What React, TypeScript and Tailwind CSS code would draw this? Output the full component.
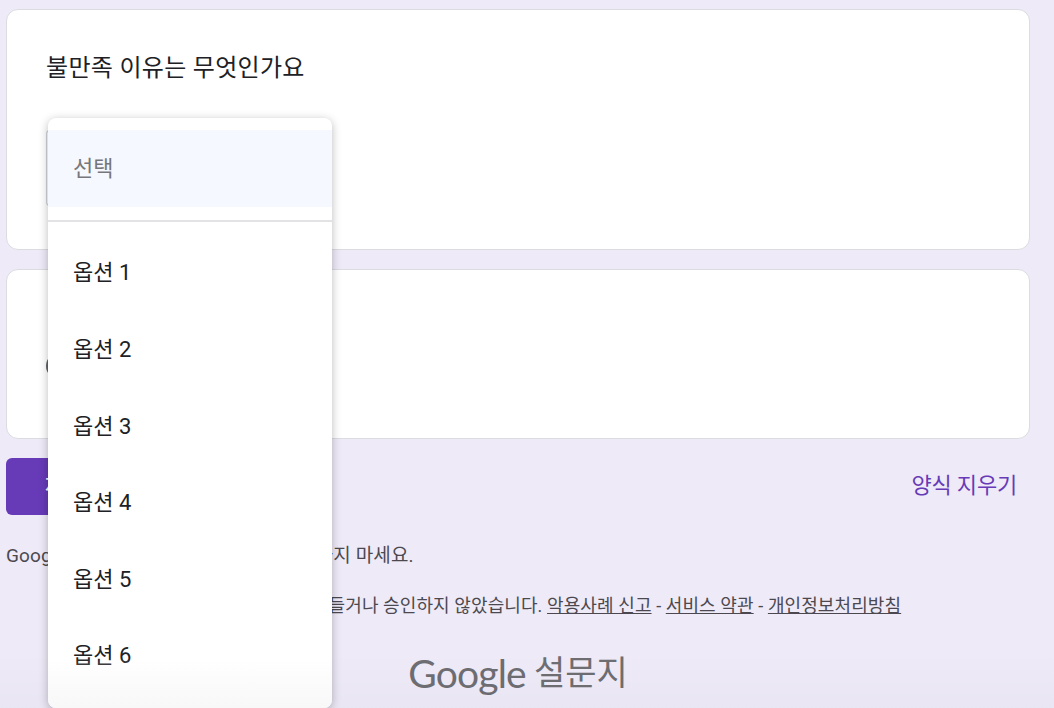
export default function App() {
  const options = ["옵션 1", "옵션 2", "옵션 3", "옵션 4", "옵션 5", "옵션 6"];
  return (
    <div className="relative h-[708px] w-[1054px] overflow-hidden bg-[#eeeaf8] font-['Roboto','Noto_Sans_CJK_KR',sans-serif] text-[#202124]">
      <div className="flex w-[1024px] flex-col pl-[6px] pt-[9px]">
        <div className="h-[241px] w-[1024px] rounded-[12px] border border-[#dadce0] bg-white pl-[39px] pt-[42px]">
          <div className="text-[24px] leading-[32px] tracking-[0.3px]">불만족 이유는 무엇인가요</div>
          <div className="mt-[46px] h-[76px] w-[10px] rounded-l-[4px] border border-r-0 border-[#d0d3d8]"></div>
        </div>
        <div className="mt-[19px] h-[170px] w-[1024px] rounded-[12px] border border-[#dadce0] bg-white pl-[39px] pt-[83px]">
          <div className="h-[26px] w-[26px] rounded-full border-2 border-[#5f6368]"></div>
        </div>
        <div className="mt-[18px] flex h-[58px] items-center justify-between">
          <div className="flex h-[57px] w-[120px] items-center rounded-[6px] bg-[#673ab7] pl-[39px] text-[20px] font-medium text-white">제출</div>
          <div className="pr-[7px] pb-[2px] text-[22px] tracking-[-0.2px] text-[#673ab7]">양식 지우기</div>
        </div>
        <div className="mt-[28px] text-[19px] leading-[26px] tracking-[0.15px] text-[#4b494f]">Google 설문지를 통해 비밀번호를 제출하지 마세요.</div>
        <div className="mt-[24px] w-[1030px] text-center text-[18px] leading-[26px] tracking-[0.1px] text-[#4b494f]">
          이 콘텐츠는 Google이 만들거나 승인하지 않았습니다. <span className="underline">악용사례 신고</span> - <span className="underline">서비스 약관</span> - <span className="underline">개인정보처리방침</span>
        </div>
        <div className="mt-[30px] flex w-[1024px] items-center justify-center gap-[8px] text-[#6d6d72]">
          <span className="font-['Lato',sans-serif] text-[39px] leading-[48px] tracking-[-0.8px]">Google</span>
          <span className="text-[34px] leading-[48px]">설문지</span>
        </div>
      </div>
      <div className="pointer-events-none absolute bottom-0 left-0 right-0 h-[56px] bg-gradient-to-b from-transparent to-[#00000005]"></div>
      <div className="absolute left-[48px] top-[118px] h-[590px] w-[284px] overflow-hidden rounded-[8px] bg-white shadow-[0_2px_10px_rgba(0,0,0,0.27)]">
        <div className="mt-[12px] flex h-[77px] items-center bg-[#f5f8fe] pl-[25px] text-[22px] text-[#76777b]">선택</div>
        <div className="mt-[13px] h-[2px] bg-[#e3e3e5]"></div>
        <div className="flex flex-col pt-[12.6px]">
          {options.map((o) => (
            <div key={o} className="flex h-[76.6px] items-center pl-[25px] text-[22px] text-[#202124]">{o}</div>
          ))}
        </div>
        <div className="absolute bottom-0 left-0 right-0 h-[50px] bg-gradient-to-b from-transparent to-[#f8f8f9]"></div>
      </div>
    </div>
  );
}
